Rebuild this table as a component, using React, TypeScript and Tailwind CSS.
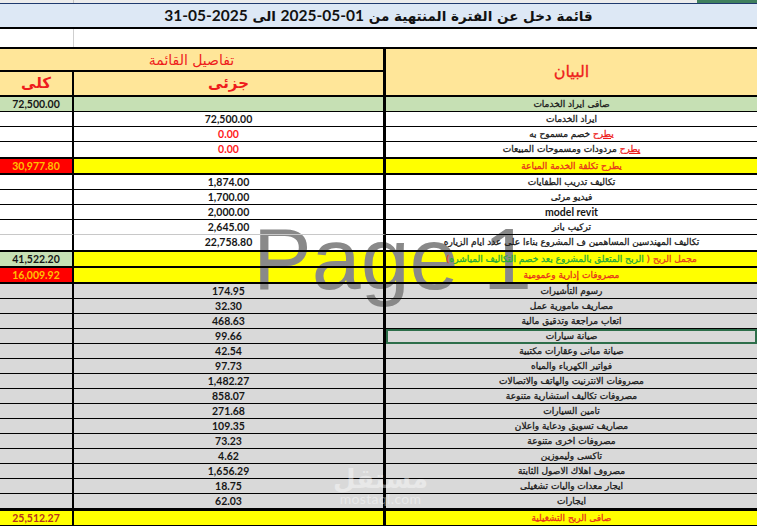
import React from 'react';

type Kind = 'green' | 'white' | 'yr' | 'yg' | 'gray' | 'final';

interface Row {
  label: React.ReactNode;
  c1?: string;
  c2?: string;
  c2red?: boolean;
  kind: Kind;
  h: string;
  bb: string;
  sel?: boolean;
  grayLine?: boolean;
  latin?: boolean;
}

const RED = 'text-[#ee1c1c]';

const rows: Row[] = [
  { label: 'صافى ايراد الخدمات', c1: '72,500.00', kind: 'green', h: 'h-[15px]', bb: 'border-b' },
  { label: 'ايراد الخدمات', c2: '72,500.00', kind: 'white', h: 'h-[15px]', bb: 'border-b' },
  {
    label: (
      <>
        <span className="text-[#ee1c1c] underline">يطرح</span> خصم مسموح به
      </>
    ),
    c2: '0.00',
    c2red: true,
    kind: 'white',
    h: 'h-[15px]',
    bb: 'border-b',
  },
  {
    label: (
      <>
        <span className="text-[#ee1c1c] underline">يطرح</span> مردودات ومسموحات المبيعات
      </>
    ),
    c2: '0.00',
    c2red: true,
    kind: 'white',
    h: 'h-[17px]',
    bb: 'border-b-2',
  },
  { label: 'يطرح تكلفة الخدمة المباعة', c1: '30,977.80', kind: 'yr', h: 'h-[16px]', bb: 'border-b-2' },
  { label: 'تكاليف تدريب الطفايات', c2: '1,874.00', kind: 'white', h: 'h-[15px]', bb: 'border-b' },
  { label: 'فيديو مرئى', c2: '1,700.00', kind: 'white', h: 'h-[15px]', bb: 'border-b' },
  { label: 'model revit', c2: '2,000.00', kind: 'white', h: 'h-[15px]', bb: 'border-b', latin: true },
  { label: 'تركيب بانر', c2: '2,645.00', kind: 'white', h: 'h-[15px]', bb: 'border-b', grayLine: true },
  {
    label: 'تكاليف المهندسين المساهمين ف المشروع بناءا على عدد ايام الزياره',
    c2: '22,758.80',
    kind: 'white',
    h: 'h-[17px]',
    bb: 'border-b-2',
  },
  {
    label: (
      <>
        <span className="text-[#e8401c]">مجمل الربح</span> <span className="text-[#e8401c]">(</span>
        <span className="text-[#25a93a]"> الربح المتعلق بالمشروع بعد خصم التكاليف المباشره</span>
        <span className="text-[#e8401c]">)</span>
      </>
    ),
    c1: '41,522.20',
    kind: 'yg',
    h: 'h-[16px]',
    bb: 'border-b-2',
  },
  { label: 'مصروفات إدارية وعمومية', c1: '16,009.92', kind: 'yr', h: 'h-[16px]', bb: 'border-b-2' },
  { label: 'رسوم التأشيرات', c2: '174.95', kind: 'gray', h: 'h-[15px]', bb: 'border-b' },
  { label: 'مصاريف مامورية عمل', c2: '32.30', kind: 'gray', h: 'h-[15px]', bb: 'border-b' },
  { label: 'اتعاب مراجعة وتدقيق مالية', c2: '468.63', kind: 'gray', h: 'h-[15px]', bb: 'border-b' },
  { label: 'صيانة سيارات', c2: '99.66', kind: 'gray', h: 'h-[15px]', bb: 'border-b', sel: true },
  { label: 'صيانة مبانى وعقارات مكتبية', c2: '42.54', kind: 'gray', h: 'h-[15px]', bb: 'border-b' },
  { label: 'فواتير الكهرباء والمياه', c2: '97.73', kind: 'gray', h: 'h-[15px]', bb: 'border-b' },
  { label: 'مصروفات الانترنيت والهاتف والاتصالات', c2: '1,482.27', kind: 'gray', h: 'h-[15px]', bb: 'border-b' },
  { label: 'مصروفات تكاليف استشارية متنوعة', c2: '858.07', kind: 'gray', h: 'h-[15px]', bb: 'border-b' },
  { label: 'تامين السيارات', c2: '271.68', kind: 'gray', h: 'h-[15px]', bb: 'border-b' },
  { label: 'مصاريف تسويق ودعاية واعلان', c2: '109.35', kind: 'gray', h: 'h-[15px]', bb: 'border-b' },
  { label: 'مصروفات اخرى متنوعة', c2: '73.23', kind: 'gray', h: 'h-[15px]', bb: 'border-b' },
  { label: 'تاكسى وليموزين', c2: '4.62', kind: 'gray', h: 'h-[15px]', bb: 'border-b' },
  { label: 'مصروف اهلاك الاصول الثابتة', c2: '1,656.29', kind: 'gray', h: 'h-[15px]', bb: 'border-b' },
  { label: 'ايجار معدات واليات تشغيلى', c2: '18.75', kind: 'gray', h: 'h-[15px]', bb: 'border-b' },
  { label: 'ايجارات', c2: '62.03', kind: 'gray', h: 'h-[17px]', bb: 'border-b-[3px]' },
  { label: 'صافى الربح التشغيلية', c1: '25,512.27', kind: 'final', h: 'h-[15px]', bb: 'border-b' },
];

function rowBg(kind: Kind): string {
  switch (kind) {
    case 'green':
      return 'bg-[#c6e0b4]';
    case 'white':
      return 'bg-white';
    case 'yr':
      return 'bg-[linear-gradient(to_right,#ff0000_72px,#ffff00_72px)]';
    case 'yg':
      return 'bg-[linear-gradient(to_right,#c6e0b4_72px,#ffff00_72px)]';
    case 'gray':
      return 'bg-[#d9d9d9]';
    case 'final':
      return 'bg-[#ffff00]';
  }
}

const NUM = "font-['Lato'] font-bold text-[10.5px] leading-none";
const AR = "font-['DejaVu_Sans',sans-serif] text-[9px] leading-none [-webkit-text-stroke:0.3px_currentColor]";

function DataRow({ r }: { r: Row }) {
  const c1Color =
    r.kind === 'yr' ? 'text-[#ffc000]' : r.kind === 'final' ? 'text-[#b8321e]' : 'text-[#161616]';
  const labelColor = r.kind === 'yr' || r.kind === 'final' ? 'text-[#e8321c]' : 'text-[#1a1a1a]';
  const lineLeft = r.grayLine ? 'border-b-[#c8c8c8]' : 'border-b-black';
  return (
    <div className={`flex ${r.h} ${rowBg(r.kind)}`}>
      <div
        className={`relative z-[2] w-[74px] shrink-0 border-r-2 border-r-black ${r.bb} ${lineLeft} flex items-center justify-center`}
      >
        {r.c1 && <span className={`${NUM} ${c1Color}`}>{r.c1}</span>}
      </div>
      <div
        className={`relative z-[2] w-[312px] shrink-0 border-r-[3px] border-r-black ${r.bb} ${lineLeft} flex items-center justify-center`}
      >
        {r.c2 && (
          <span className={`${NUM} ${r.c2red ? 'text-[#ff1a1a]' : 'text-[#161616]'}`}>{r.c2}</span>
        )}
      </div>
      <div
        className={`relative z-[2] flex-1 ${r.bb} border-b-black flex items-center justify-center ${
          r.sel ? 'outline-2 outline-solid outline-[#2d6e4a] -outline-offset-2' : ''
        }`}
      >
        {r.latin ? (
          <span className={`${NUM} text-[#161616]`}>{r.label}</span>
        ) : (
          <span dir="rtl" className={`${AR} ${labelColor} whitespace-nowrap`}>
            {r.label}
          </span>
        )}
      </div>
    </div>
  );
}

export default function App() {
  return (
    <div className="relative w-[757px] h-[526px] overflow-hidden bg-white">
      {/* top strip */}
      <div className="flex h-[3px] bg-[#ececec]">
        <div className="w-[74px] border-r border-r-[#c4c4c4]" />
        <div className="flex-1" />
        <div className="w-[60px] bg-[#3f7f5d]" />
      </div>
      {/* title */}
      <div
        dir="rtl"
        className="h-[26px] border-t border-t-[#1f3a6e] border-b-2 border-b-black bg-[#dde8f5] flex items-center justify-center"
      >
        <span className="font-['DejaVu_Sans',sans-serif] font-bold text-[13.5px] text-[#111] leading-none whitespace-nowrap">
          قائمة دخل عن الفترة المنتهية من{' '}
          <span dir="ltr" className="font-['Lato'] text-[15.5px]">
            2025-05-01
          </span>{' '}
          الى{' '}
          <span dir="ltr" className="font-['Lato'] text-[15.5px]">
            31-05-2025
          </span>
        </span>
      </div>
      {/* blank row */}
      <div className="flex h-[20px] border-b-2 border-b-black">
        <div className="w-[74px] border-r border-r-[#cfcfcf]" />
        <div className="flex-1" />
      </div>
      {/* header */}
      <div className="flex h-[48px] border-b-2 border-b-black bg-[#ffe699]">
        <div className="w-[386px] shrink-0 border-r-[3px] border-r-black flex flex-col">
          <div className="h-[23px] border-b-2 border-b-black flex items-center justify-center">
            <span dir="rtl" className={`font-['DejaVu_Sans',sans-serif] text-[14px] leading-none ${RED}`}>
              تفاصيل القائمة
            </span>
          </div>
          <div className="flex-1 flex">
            <div className="w-[74px] border-r-2 border-r-black flex items-center justify-center">
              <span dir="rtl" className={`font-['DejaVu_Sans',sans-serif] font-bold text-[15px] leading-none ${RED}`}>
                كلى
              </span>
            </div>
            <div className="flex-1 flex items-center justify-center">
              <span dir="rtl" className={`font-['DejaVu_Sans',sans-serif] font-bold text-[15px] leading-none ${RED}`}>
                جزئى
              </span>
            </div>
          </div>
        </div>
        <div className="flex-1 flex items-center justify-center">
          <span
            dir="rtl"
            className={`font-['DejaVu_Sans',sans-serif] text-[16px] leading-none [-webkit-text-stroke:0.3px_currentColor] ${RED}`}
          >
            البيان
          </span>
        </div>
      </div>
      {/* data rows */}
      {rows.map((r, i) => (
        <DataRow key={i} r={r} />
      ))}

      {/* Page watermark (between cell fills and cell borders/text) */}
      <div className="pointer-events-none absolute z-[1] left-[253px] top-[215px] font-['Liberation_Sans',sans-serif] text-[88px] leading-none text-[#898989] whitespace-nowrap">
        Page 1
      </div>
      {/* mostaql watermark */}
      <div className="pointer-events-none absolute z-[3] left-[333px] top-[466px] flex flex-col items-center text-white opacity-40">
        <span dir="rtl" className="font-['DejaVu_Sans',sans-serif] font-bold text-[26px] leading-none">
          مستقل
        </span>
        <span className="font-['Lato'] text-[14px] leading-none tracking-wide">mostaql.com</span>
      </div>
    </div>
  );
}
